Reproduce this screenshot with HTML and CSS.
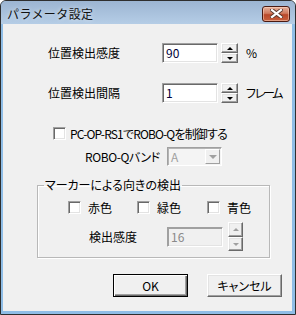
FILE: index.html
```html
<!DOCTYPE html>
<html lang="ja">
<head>
    <meta charset="UTF-8">
    <meta name="viewport" content="width=device-width, initial-scale=1.0">
    <title>パラメータ設定</title>
    <link rel="stylesheet" href="styles.css">
</head>
<body>
    <div class="window">
        <!-- タイトルバー -->
        <div class="titlebar">
            <span class="title">パラメータ設定</span>
            <button class="close" aria-label="閉じる">
                <svg width="13" height="9" viewBox="0 0 13 9">
                    <path d="M2 1 L11 8 M11 1 L2 8" stroke="#5a3a30" stroke-width="4" stroke-linecap="square"/>
                    <path d="M2 1 L11 8 M11 1 L2 8" stroke="#ffffff" stroke-width="2.2" stroke-linecap="square"/>
                </svg>
            </button>
        </div>

        <div class="client">
            <div class="param first">
                <span class="label">位置検出感度</span>
                <div class="edit">90</div>
                <div class="spin">
                    <span class="spin-btn up"></span>
                    <span class="spin-btn down"></span>
                </div>
                <span class="unit">%</span>
            </div>

            <div class="param second">
                <span class="label">位置検出間隔</span>
                <div class="edit">1</div>
                <div class="spin">
                    <span class="spin-btn up"></span>
                    <span class="spin-btn down"></span>
                </div>
                <span class="unit kana">フレーム</span>
            </div>

            <div class="check-row">
                <span class="box"></span>
                <span class="check-text">PC-OP-RS1でROBO-Qを制御する</span>
            </div>

            <div class="band-row">
                <span class="band-label">ROBO-Qバンド</span>
                <div class="combo">
                    <span class="combo-text">A</span>
                    <span class="combo-btn"></span>
                </div>
            </div>

            <!-- マーカー検出グループ -->
            <fieldset class="group">
                <legend>マーカーによる向きの検出</legend>
                <div class="colors">
                    <label class="opt"><span class="box"></span><span>赤色</span></label>
                    <label class="opt"><span class="box"></span><span>緑色</span></label>
                    <label class="opt"><span class="box"></span><span>青色</span></label>
                </div>
                <div class="sens-row">
                    <span class="sens-label">検出感度</span>
                    <div class="edit disabled">16</div>
                    <div class="spin small">
                        <span class="spin-btn up"></span>
                        <span class="spin-btn down"></span>
                    </div>
                </div>
            </fieldset>

            <div class="actions">
                <button class="btn default">OK</button>
                <button class="btn">キャンセル</button>
            </div>
        </div>
    </div>
</body>
</html>
```

FILE: styles.css
```css
body {
    margin: 0;
    background: #ffffff;
}

.window {
    width: 296px;
    height: 315px;
    box-sizing: border-box;
    border: 1px solid #2e2e2e;
    border-radius: 6px 6px 0 0;
    background-color: #8fbde6;
    padding: 0 3px 3px 2px;
    display: flex;
    flex-direction: column;
    overflow: hidden;
}

.titlebar {
    height: 23px;
    flex: none;
    margin: 0 -3px 0 -2px;
    padding: 0 5px 0 6px;
    display: flex;
    align-items: center;
    justify-content: space-between;
    background: linear-gradient(#9cb5d2, #b5cde6);
    font-family: "Noto Sans CJK JP", sans-serif;
    font-size: 12px;
    color: #111;
}

.title {
    text-shadow: 0 0 4px rgba(255, 255, 255, 0.7);
    margin-top: 1px;
    letter-spacing: 0.4px;
}

.close {
    width: 28px;
    height: 16px;
    margin-top: 2px;
    padding: 0;
    border: 1px solid #4a1a12;
    border-radius: 3px;
    background: linear-gradient(#e6b09c 0%, #d07a5e 45%, #b9482a 55%, #c8603e 100%);
    box-shadow: inset 0 0 0 1px rgba(255, 220, 200, 0.5);
    display: flex;
    align-items: center;
    justify-content: center;
}

/* クライアント領域 */
.client {
    flex: 1;
    background: #f0f0f0;
    font-family: "Noto Sans CJK JP", sans-serif;
    font-size: 12px;
    line-height: 14px;
    color: #000;
    white-space: nowrap;
}

.param {
    display: flex;
    align-items: center;
    height: 20px;
    padding-left: 45px;
}

.param.first {
    margin-top: 19px;
}

.param.second {
    margin-top: 20px;
}

.param .label {
    width: 114px;
}

.edit {
    width: 56px;
    height: 20px;
    box-sizing: border-box;
    background: #fff;
    border: 1px solid;
    border-color: #a0a0a0 #fff #fff #a0a0a0;
    box-shadow: inset 1px 1px #696969, inset -1px -1px #e3e3e3;
    padding-left: 3px;
    line-height: 18px;
    color: #00003a;
    flex: none;
}

.edit.disabled {
    background: #f0f0f0;
    color: #8a8a8a;
    border-color: #a0a0a0 #fff #fff #a0a0a0;
    box-shadow: inset 1px 1px #a0a0a0, inset -1px -1px #e3e3e3;
}

.spin {
    display: flex;
    flex-direction: column;
    margin-left: 3px;
    flex: none;
}

.spin-btn {
    width: 17px;
    height: 10px;
    box-sizing: border-box;
    background: #f0f0f0;
    border: 1px solid;
    border-color: #fff #696969 #696969 #fff;
    box-shadow: inset -1px -1px #a0a0a0, inset 1px 1px #e3e3e3;
    display: flex;
    align-items: center;
    justify-content: center;
}

.spin-btn::before {
    content: "";
    border-left: 3px solid transparent;
    border-right: 3px solid transparent;
}

.spin-btn.up::before {
    border-bottom: 3px solid #000;
}

.spin-btn.down::before {
    border-top: 3px solid #000;
}

.spin.small {
    margin-left: 5px;
}

.spin.small .spin-btn {
    width: 15px;
    height: 15px;
}

.spin.small .spin-btn.down {
    height: 14px;
}

.spin.small .spin-btn.up::before {
    border-bottom-color: #a0a0a0;
}

.spin.small .spin-btn.down::before {
    border-top-color: #a0a0a0;
}

.unit {
    margin-left: 8px;
}

.unit.kana {
    margin-left: 7px;
    letter-spacing: -3px;
}

.box {
    width: 13px;
    height: 13px;
    box-sizing: border-box;
    background: #fff;
    border: 1px solid;
    border-color: #a0a0a0 #fff #fff #a0a0a0;
    box-shadow: inset 1px 1px #696969, inset -1px -1px #e3e3e3;
    flex: none;
}

.check-row {
    display: flex;
    align-items: center;
    height: 13px;
    margin-top: 24px;
    padding-left: 50px;
}

.check-text {
    margin-left: 4px;
    letter-spacing: -0.85px;
    font-feature-settings: "palt";
}

.band-row {
    display: flex;
    align-items: center;
    height: 19px;
    margin-top: 7px;
    padding-left: 82px;
}

.band-label {
    width: 82px;
    letter-spacing: -0.4px;
    font-feature-settings: "palt";
}

.combo {
    width: 55px;
    height: 19px;
    box-sizing: border-box;
    border: 1px solid;
    border-color: #a0a0a0 #fff #fff #a0a0a0;
    box-shadow: inset 1px 1px #b4b4b4;
    background: #f4f4f4;
    display: flex;
    align-items: center;
    justify-content: space-between;
    padding: 1px 1px 1px 3px;
    color: #a0a0a0;
}

.combo-btn {
    width: 15px;
    height: 15px;
    box-sizing: border-box;
    background: #f0f0f0;
    border: 1px solid;
    border-color: #fff #a0a0a0 #a0a0a0 #fff;
    display: flex;
    align-items: center;
    justify-content: center;
}

.combo-btn::before {
    content: "";
    border-left: 4px solid transparent;
    border-right: 4px solid transparent;
    border-top: 4px solid #a0a0a0;
}

/* グループボックス */
.group {
    margin: 11px 0 0 34px;
    width: 233px;
    box-sizing: border-box;
    padding: 0 0 6px 0;
    border: 1px solid #b8b8b8;
    box-shadow: inset 1px 1px #fff, 1px 1px #fff;
}

.group legend {
    margin-left: 6px;
    padding: 0 1px;
    line-height: 16px;
    font-feature-settings: "palt";
}

.colors {
    display: flex;
    align-items: center;
    height: 13px;
    margin-top: 8px;
    padding-left: 30px;
}

.opt {
    display: flex;
    align-items: center;
    gap: 7px;
}

.opt:nth-child(1) {
    width: 69px;
}

.opt:nth-child(2) {
    width: 70px;
}

.sens-row {
    display: flex;
    align-items: center;
    height: 29px;
    margin-top: 8px;
    padding-left: 51px;
}

.sens-label {
    width: 78px;
}

/* ボタン */
.actions {
    display: flex;
    justify-content: flex-end;
    gap: 19px;
    margin-top: 16px;
    padding-right: 10px;
}

.btn {
    width: 75px;
    height: 23px;
    box-sizing: border-box;
    font-family: "Noto Sans CJK JP", sans-serif;
    font-size: 12px;
    font-feature-settings: "palt";
    color: #000;
    background: #f0f0f0;
    border: 1px solid;
    border-color: #fff #696969 #696969 #fff;
    box-shadow: inset -1px -1px #a0a0a0, inset 1px 1px #e3e3e3;
    padding: 0;
}

.btn.default {
    border: 1px solid #000;
    box-shadow: inset 1px 1px #fff, inset -1px -1px #696969, inset -2px -2px #a0a0a0;
}
```
